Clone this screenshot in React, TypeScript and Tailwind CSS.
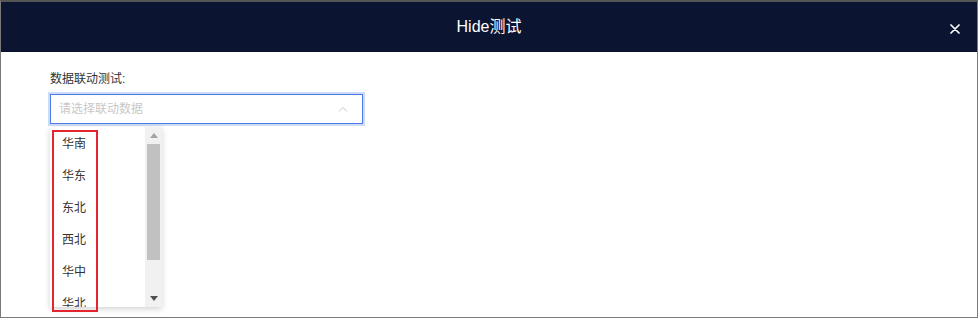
import React from "react";

const items = ["华南", "华东", "东北", "西北", "华中", "华北"];

export default function App() {
  return (
    <div
      className="w-[979px] h-[319px] bg-white"
      style={{ fontFamily: '"Liberation Sans", "Noto Sans CJK SC", sans-serif' }}
    >
      <div className="w-[978px] h-[318px] border-t-2 border-t-[#555555] border-l border-r border-b border-l-[#7a7a7a] border-r-[#7a7a7a] border-b-[#7a7a7a] flex flex-col">
        <div className="h-[50px] bg-[#0b1431] relative flex items-center justify-center shrink-0">
          <span className="text-white text-[16px] leading-none">Hide测试</span>
          <button className="absolute right-[15px] top-[20px] w-[14px] h-[14px] flex items-center justify-center">
            <svg width="10" height="10" viewBox="0 0 10 10">
              <path d="M1 1 L9 9 M9 1 L1 9" stroke="white" strokeWidth="1.7" strokeLinecap="round" />
            </svg>
          </button>
        </div>
        <div className="pl-[49px] pt-[18px] relative flex-1">
          <div className="text-[12px] leading-[18px] text-[#333]">数据联动测试:</div>
          <div className="mt-[6px] w-[313px] h-[30px] border border-[#4a7be6] ring-2 ring-[#cddbf7] flex items-center justify-between pl-[8px] pr-[14px]">
            <span className="text-[12px] text-[#c8c8c8]">请选择联动数据</span>
            <svg width="10" height="6" viewBox="0 0 10 6">
              <path d="M1 5.5 L5 1.5 L9 5.5" fill="none" stroke="#c0c4cc" strokeWidth="1" />
            </svg>
          </div>
          <div className="absolute left-[49px] top-[75px] w-[112px] h-[180px] bg-white shadow-[0_2px_6px_rgba(0,0,0,0.18)] flex overflow-hidden">
            <div className="flex-1 flex flex-col pt-[1px]">
              {items.map((it) => (
                <div key={it} className="h-[32px] shrink-0 flex items-center pl-[12px] text-[12px] text-[#333]">
                  {it}
                </div>
              ))}
            </div>
            <div className="w-[17px] bg-[#f1f1f1] flex flex-col items-center">
              <div className="h-[17px] flex items-center justify-center">
                <svg width="8" height="5" viewBox="0 0 8 5">
                  <path d="M0 5 L4 0 L8 5 Z" fill="#a3a3a3" />
                </svg>
              </div>
              <div className="w-[13px] h-[116px] bg-[#c1c1c1]" />
              <div className="flex-1" />
              <div className="h-[17px] flex items-center justify-center">
                <svg width="8" height="5" viewBox="0 0 8 5">
                  <path d="M0 0 L8 0 L4 5 Z" fill="#505050" />
                </svg>
              </div>
            </div>
          </div>
          <div className="absolute left-[51px] top-[78px] w-[46px] h-[182px] border-2 border-[#e3262d] pointer-events-none" />
        </div>
      </div>
    </div>
  );
}
